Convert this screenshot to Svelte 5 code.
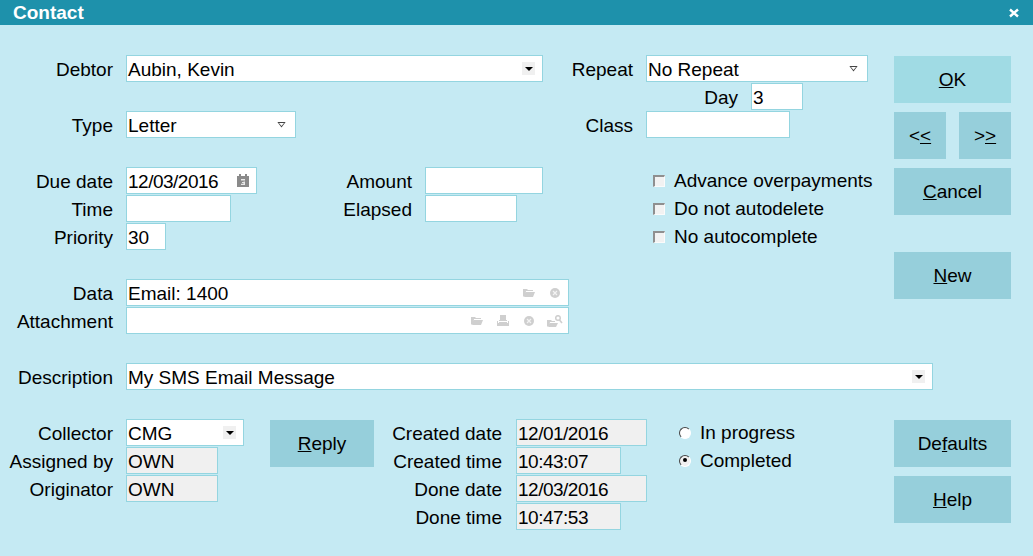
<script>
  const g = '#cfcfcf';
</script>

<div class="dialog">
  <header class="title">
    <span>Contact</span>
    <svg width="10" height="10" viewBox="0 0 10 10"><path d="M1 1.5 9 8.5M9 1.5 1 8.5" stroke="#fff" stroke-width="2.4" /></svg>
  </header>

  <form class="form">
    <span class="lb r1 c1">Debtor</span>
    <div class="f w417 r1 c2 sp4"><span class="v">Aubin, Kevin</span><span class="drop"><i class="tri"></i></span></div>
    <span class="lb r1 c5">Repeat</span>
    <div class="f w222 r1 c6 sp2"><span class="v">No Repeat</span><i class="otri"></i></div>
    <span class="lb r2 c6">Day</span>
    <div class="f w52 r2 c7"><span class="v">3</span></div>
    <button type="button" class="btn wide ok r1 c8"><span><u>O</u>K</span></button>

    <span class="lb r3 c1">Type</span>
    <div class="f w170 r3 c2 sp2"><span class="v">Letter</span><i class="otri"></i></div>
    <span class="lb r3 c5">Class</span>
    <div class="f w144 r3 c6 sp2"></div>
    <button type="button" class="btn small r3 c8"><span>&lt;<u>&lt;</u></span></button>
    <button type="button" class="btn small r3 c9"><span>&gt;<u>&gt;</u></span></button>

    <span class="lb r5 c1">Due date</span>
    <div class="f w131 r5 c2"><span class="v num">12/03/2016</span>
      <svg class="cal" width="12" height="13" viewBox="0 0 12 13"><path fill="#8a8a8a" d="M0 2h2V0h2v2h4V0h2v2h2v11H0z"/><path fill="#e8e8e8" d="M4 5h4v1.500H6.500v1H8V11H4V9.800h2.500V9H5V8h1.500V6.500H4z"/></svg></div>
    <span class="lb r5 c3">Amount</span>
    <div class="f w118 r5 c4 sp2"></div>
    <div class="chk r5 c6 sp2"><i class="box"></i><span>Advance overpayments</span></div>
    <button type="button" class="btn wide r5 c8"><span><u>C</u>ancel</span></button>

    <span class="lb r6 c1">Time</span>
    <div class="f w105 r6 c2"></div>
    <span class="lb r6 c3">Elapsed</span>
    <div class="f w92 r6 c4 sp2"></div>
    <div class="chk r6 c6 sp2"><i class="box"></i><span>Do not autodelete</span></div>

    <span class="lb r7 c1">Priority</span>
    <div class="f w40 r7 c2"><span class="v">30</span></div>
    <div class="chk r7 c6 sp2"><i class="box"></i><span>No autocomplete</span></div>
    <button type="button" class="btn wide r8 c8"><span><u>N</u>ew</span></button>

    <span class="lb r9 c1">Data</span>
    <div class="f w443 r9 c2 sp4"><span class="v">Email: 1400</span>
      <svg class="ic m15" width="12" height="8" viewBox="0 0 12 8"><path fill={g} d="M0 0h4l1 1h5v1H3L2 7H1L0 8zM3 3h9l-2 5H1z"/></svg>
      <svg class="ic m8" width="10" height="10" viewBox="0 0 10 10"><circle cx="5" cy="5" r="5" fill={g}/><path d="M3 3l4 4M7 3 3 7" stroke="#f3f3f3" stroke-width="1.200"/></svg>
    </div>

    <span class="lb r10 c1">Attachment</span>
    <div class="f w443 r10 c2 sp4"><span class="v"></span>
      <svg class="ic m14" width="12" height="8" viewBox="0 0 12 8"><path fill={g} d="M0 0h4l1 1h5v1H3L2 7H1L0 8zM3 3h9l-2 5H1z"/></svg>
      <svg class="ic m15" width="12" height="11" viewBox="0 0 12 11"><path fill={g} d="M3 0h6v5h1v1H2V5h1zM0 6h1v2h10V6h1v5H0z"/><path fill={g} d="M2 7h8v1H2z"/></svg>
      <svg class="ic m13" width="10" height="10" viewBox="0 0 10 10"><circle cx="5" cy="5" r="5" fill={g}/><path d="M3 3l4 4M7 3 3 7" stroke="#f3f3f3" stroke-width="1.200"/></svg>
      <svg class="ic m5" width="16" height="12" viewBox="0 0 16 12"><path fill={g} d="M0 5h4l1 1h3v1H3l-1 4H1l-1 1zM3 8h8l-2 4H1z"/><circle cx="11" cy="3" r="2.300" fill="none" stroke={g} stroke-width="1.500"/><path d="M12.500 5 15 8" stroke={g} stroke-width="1.600"/></svg>
    </div>

    <span class="lb r12 c1">Description</span>
    <div class="f w807 r12 c2 sp7"><span class="v">My SMS Email Message</span><span class="drop"><i class="tri"></i></span></div>

    <span class="lb r14 c1">Collector</span>
    <div class="f w118 r14 c2"><span class="v">CMG</span><span class="drop"><i class="tri"></i></span></div>
    <button type="button" class="btn reply r14 c3"><span><u>R</u>eply</span></button>
    <span class="lb mid r14 c3 sp2">Created date</span>
    <div class="f ro w131 r14 c5"><span class="v num">12/01/2016</span></div>
    <div class="rad r14 c6"><i class="dot"></i><span>In progress</span></div>
    <button type="button" class="btn wide r14 c8"><span>De<u>f</u>aults</span></button>

    <span class="lb r15 c1">Assigned by</span>
    <div class="f ro w92 r15 c2"><span class="v">OWN</span></div>
    <span class="lb mid r15 c3 sp2">Created time</span>
    <div class="f ro w105 r15 c5"><span class="v num">10:43:07</span></div>
    <div class="rad r15 c6"><i class="dot on"></i><span>Completed</span></div>

    <span class="lb r16 c1">Originator</span>
    <div class="f ro w92 r16 c2"><span class="v">OWN</span></div>
    <span class="lb mid r16 c3 sp2">Done date</span>
    <div class="f ro w131 r16 c5"><span class="v num">12/03/2016</span></div>
    <button type="button" class="btn wide r16 c8"><span><u>H</u>elp</span></button>

    <span class="lb mid r17 c3 sp2">Done time</span>
    <div class="f ro w105 r17 c5"><span class="v num">10:47:53</span></div>
  </form>
</div>

<style>
  :global(body) { margin: 0; }
  .dialog {
    width: 1033px; height: 556px; overflow: hidden;
    background: #c5eaf3; color: #000;
    font: 19px/25px "Liberation Sans", Arial, sans-serif;
  }
  .title {
    box-sizing: border-box;
    height: 25px; background: #1e91ab; color: #fff;
    font-weight: 700; display: flex; align-items: center;
    justify-content: space-between; padding: 0 14px 0 13px;
  }
  .form {
    display: grid;
    grid-template-columns: 126px 144px 155px 91px 130px 105px 143px 65px 74px;
    grid-template-rows: repeat(17, 28px);
    padding-top: 30px;
  }
  .r1 { grid-row-start: 1; } .r2 { grid-row-start: 2; } .r3 { grid-row-start: 3; }
  .r5 { grid-row-start: 5; } .r6 { grid-row-start: 6; } .r7 { grid-row-start: 7; }
  .r8 { grid-row-start: 8; } .r9 { grid-row-start: 9; } .r10 { grid-row-start: 10; }
  .r12 { grid-row-start: 12; } .r14 { grid-row-start: 14; } .r15 { grid-row-start: 15; }
  .r16 { grid-row-start: 16; } .r17 { grid-row-start: 17; }
  .c1 { grid-column-start: 1; } .c2 { grid-column-start: 2; } .c3 { grid-column-start: 3; }
  .c4 { grid-column-start: 4; } .c5 { grid-column-start: 5; } .c6 { grid-column-start: 6; }
  .c7 { grid-column-start: 7; } .c8 { grid-column-start: 8; } .c9 { grid-column-start: 9; }
  .sp2 { grid-column-end: span 2; } .sp4 { grid-column-end: span 4; } .sp7 { grid-column-end: span 7; }

  .lb { padding-right: 13px; line-height: 29px; justify-self: end; white-space: nowrap; }
  .mid { padding-right: 14px; }
  .f {
    box-sizing: border-box; height: 27px; background: #fff;
    border: 1px solid #94d5e0; display: flex; align-items: center; padding-left: 1px;
  }
  .ro { background: #f0f0f0; }
  .v { flex: 1; white-space: nowrap; line-height: 25px; padding-top: 2px; }
  .num { letter-spacing: -0.5px; }
  .w40 { width: 40px; } .w52 { width: 52px; } .w92 { width: 92px; }
  .w105 { width: 105px; } .w118 { width: 118px; } .w131 { width: 131px; }
  .w144 { width: 144px; } .w170 { width: 170px; } .w222 { width: 222px; }
  .w417 { width: 417px; } .w443 { width: 443px; } .w807 { width: 807px; }
  .drop {
    width: 13px; height: 13px; background: #f0f0f0; margin-right: 7px;
    display: flex; align-items: center; justify-content: center;
  }
  .tri { width: 0; height: 0; border: 4px solid transparent; border-top: 4px solid #000; border-bottom: 0; }
  .otri {
    width: 9px; height: 6px; margin-right: 9px; background: #444;
    clip-path: polygon(0 0, 100% 0, 50% 100%);
    position: relative;
  }
  .otri::after {
    content: ""; position: absolute; inset: 1px 1.500px 1.500px;
    background: #fff; clip-path: polygon(0 0, 100% 0, 50% 100%);
  }
  .cal { margin-right: 7px; }
  .ic { flex: none; }
  .m5 { margin-right: 5px; } .m8 { margin-right: 8px; } .m13 { margin-right: 13px; }
  .m14 { margin-right: 14px; } .m15 { margin-right: 15px; }
  .btn {
    border: 0; padding: 0; margin: 1px 0 0; height: 47px;
    grid-row-end: span 2;
    background: #96cfdb; color: #000; font: inherit; display: block;
  }
  .wide { width: 117px; grid-column-end: span 2; }
  .ok { background: #a0dbe4; }
  .reply { width: 104px; }
  .small { width: 52px; }
  .chk, .rad { display: flex; align-items: center; height: 27px; white-space: nowrap; }
  .chk { padding-left: 7px; }
  .box {
    flex: none; width: 12px; height: 12px; box-sizing: border-box; margin-right: 9px;
    border-style: solid; border-width: 2px 1px 1px 2px;
    border-color: #8f8f8f #fbfbfb #fbfbfb #8f8f8f; background: #f2f2f2;
  }
  .rad { padding-left: 33px; }
  .dot {
    flex: none; width: 12px; height: 12px; box-sizing: border-box; border-radius: 50%; background: #fff;
    border: 1.500px solid; border-color: #444 #fff #fff #444; margin-right: 9px;
    position: relative;
  }
  .dot.on { background: #f0f0f0; }
  .dot.on::after {
    content: ""; position: absolute; left: 2.500px; top: 2.500px; width: 4px; height: 4px;
    background: #000; border-radius: 50%;
  }
</style>
